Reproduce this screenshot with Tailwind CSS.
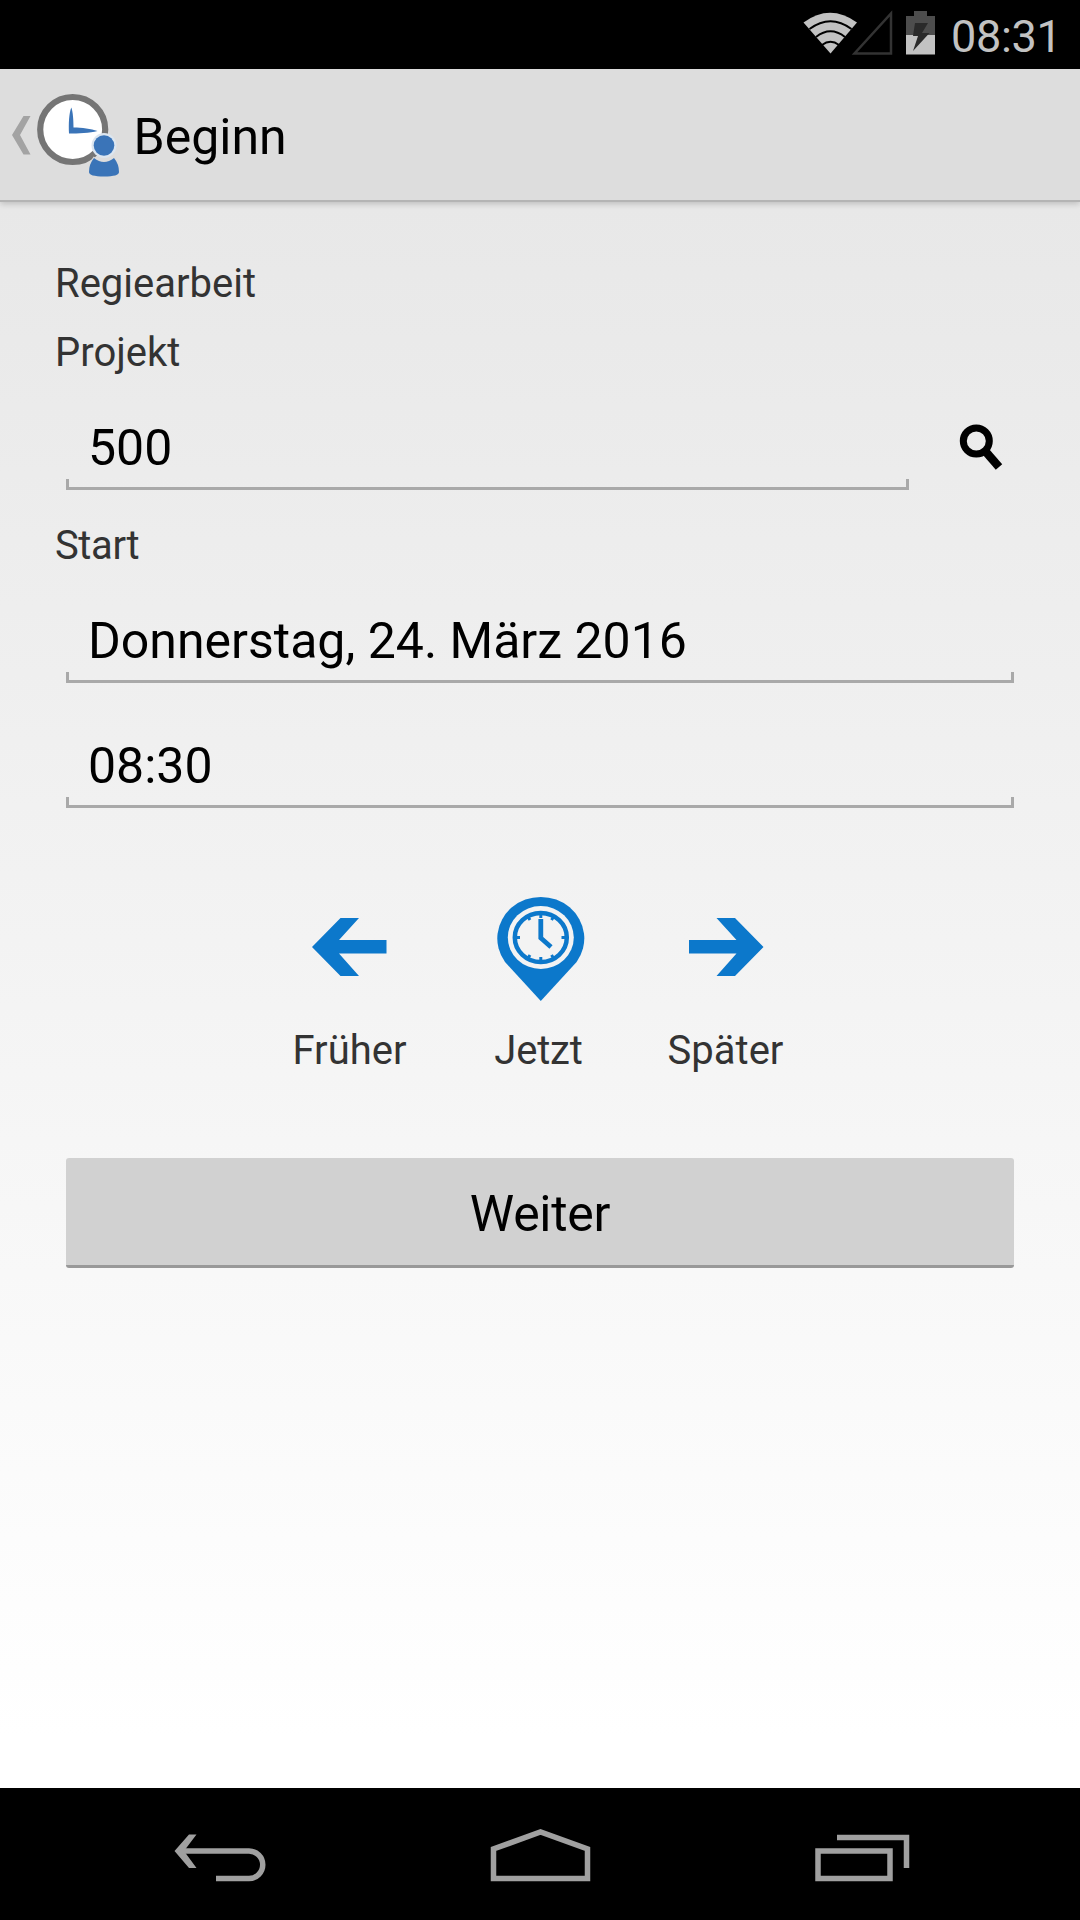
<!DOCTYPE html>
<html lang="de">
<head>
  <meta charset="UTF-8" />
  <meta name="viewport" content="width=device-width, initial-scale=1.0"/>
  <title>Beginn</title>
  <script src="https://cdn.jsdelivr.net/npm/@tailwindcss/browser@4"></script>
</head>
<body class="h-[1920px] w-[1080px] flex flex-col overflow-hidden bg-black text-black font-['Roboto',sans-serif]">

  <!-- Status bar -->
  <div class="h-[69px] shrink-0 flex bg-black">
    <svg class="w-[160px] h-[69px] ml-[791px]" viewBox="791 0 160 69">
      <path d="M803.5 22.5Q830 3 857 22.5L830.5 53.5Z" fill="#c2c2c2"/>
      <g fill="none" stroke="#000" stroke-width="2">
        <path d="M809.5 29Q830.5 13.5 851.5 29M816 37Q830.5 25.5 845 37M822 45Q830.5 38.5 839 45"/>
      </g>
      <path d="M891 13.5V53.5H854.5Z" fill="none" stroke="#333" stroke-width="2.5"/>
      <path d="M914 11H927V16H935V35H906V16H914Z" fill="#4d4d4d"/>
      <path d="M906 35H935V54.5H906Z" fill="#c2c2c2"/>
      <path d="M915 23H928L922 33H929.5L913 51L918 36H913Z" fill="#2a2a2a"/>
    </svg>
    <span class="text-[45px] leading-[74px] h-[69px] tracking-[-0.3px] text-[#c2c2c2]">08:31</span>
  </div>

  <div class="flex-1 flex flex-col bg-linear-to-b from-[#e6e6e6] to-white to-97%">

    <!-- Action bar -->
    <header class="h-[133px] shrink-0 flex bg-[#dddddd] border-b-2 border-[#b4b4b4] shadow-[0_2px_6px_rgba(0,0,0,0.18)]">
      <svg class="w-[135px] h-[131px]" viewBox="0 69 135 131">
        <path d="M23.5 116H30.5L20 135L30.5 154.5H23.5L12 135Z" fill="#a3a3a3"/>
        <circle cx="72.7" cy="129.5" r="32.5" fill="#fff" stroke="#757575" stroke-width="6.2"/>
        <path d="M71.3 107.5C73 112 73.5 120 73.5 127.5C82 127.5 91 129 97.5 131C90 133 78 133.5 69 133.5C68.5 124 69 113 71.3 107.5Z" fill="#3a74b8"/>
        <path d="M94 158Q104 166 114 158Q119 164 119 172Q119 176.5 104 176.5Q89 176.5 89 172Q89 164 94 158Z" fill="#3a74b8" stroke="#dddddd" stroke-width="2" paint-order="stroke"/>
        <circle cx="104" cy="145.5" r="12.5" fill="#dce6f0"/>
        <circle cx="104" cy="145.5" r="10.3" fill="#3a74b8"/>
      </svg>
      <h1 class="text-[50px] leading-[136px] h-[131px] -ml-[1.5px]">Beginn</h1>
    </header>

    <!-- Form -->
    <main class="flex flex-col px-[56px] pt-[47px] text-[50px]">
      <p class="text-[40px] leading-[69px] -ml-px text-[#333]">Regiearbeit</p>
      <p class="text-[40px] leading-[69px] -ml-px text-[#333]">Projekt</p>

      <div class="flex pl-[10px] pt-[30px]">
        <div class="w-[843px]">
          <div class="pl-[22px] leading-[62px]">500</div>
          <div class="h-[11px] border-3 border-t-0 border-[#a9a9a9]"></div>
        </div>
        <svg class="w-[60px] h-[60px] ml-[41px]" viewBox="950 416 60 60">
          <circle cx="976.3" cy="440" r="13" fill="none" stroke="#000" stroke-width="7"/>
          <path d="M986 451L999 466" stroke="#000" stroke-width="8.5"/>
        </svg>
      </div>

      <p class="text-[40px] leading-[69px] mt-[21px] -ml-px tracking-[-0.4px] text-[#333]">Start</p>

      <div class="mt-[30px] mx-[10px]">
        <div class="pl-[22px] leading-[62px]">Donnerstag, 24. März 2016</div>
        <div class="h-[11px] border-3 border-t-0 border-[#a9a9a9]"></div>
      </div>
      <div class="mt-[52px] mx-[10px]">
        <div class="pl-[22px] leading-[62px]">08:30</div>
        <div class="h-[11px] border-3 border-t-0 border-[#a9a9a9]"></div>
      </div>

      <!-- Time shortcuts -->
      <div class="flex justify-center mt-[77px] pr-[5px] text-[40px] text-[#333]">
        <div class="w-[188px] flex flex-col items-center">
          <svg class="w-[76px] h-[120px]" viewBox="312 885 76 120">
            <path d="M312 947L340.500 918H359L339 940H386.500V953.500H339L359 976H340.500Z" fill="#0c78cb"/>
          </svg>
          <span class="leading-[91px]">Früher</span>
        </div>
        <div class="w-[188px] flex flex-col items-center">
          <svg class="w-[100px] h-[120px]" viewBox="488 885 100 120">
            <path d="M540.8 1001L505 962A43.5 41.5 0 1 1 576.600 962Z" fill="#0c78cb"/>
            <ellipse cx="540.8" cy="937.5" rx="33" ry="31.5" fill="#f3f3f3"/>
            <ellipse cx="540.8" cy="937.5" rx="26" ry="24.5" fill="none" stroke="#0c78cb" stroke-width="4.5"/>
            <path d="M540.8 913V918M540.8 957V962M515 937.5H520M561.5 937.5H566.5M528 917L530 920M553.5 917L551.5 920M528 958L530 955M553.5 958L551.5 955" stroke="#0c78cb" stroke-width="3"/>
            <path d="M540.8 919V938L551 947" fill="none" stroke="#0c78cb" stroke-width="4.8"/>
          </svg>
          <span class="leading-[91px] pl-[2px] tracking-[-0.2px]">Jetzt</span>
        </div>
        <div class="w-[188px] flex flex-col items-center">
          <svg class="w-[76px] h-[120px]" viewBox="688 885 76 120">
            <path d="M763.5 947L735 918H716.5L736.5 940H689V953.5H736.5L716.5 976H735Z" fill="#0c78cb"/>
          </svg>
          <span class="leading-[91px]">Später</span>
        </div>
      </div>

      <button class="mx-[10px] mt-[62px] pt-[6px] h-[110px] rounded-[3px] bg-[#d1d1d1] border-b-3 border-[#999] tracking-[-0.3px]">Weiter</button>
    </main>
  </div>

  <!-- Navigation bar -->
  <nav class="h-[132px] shrink-0 bg-black">
    <svg class="w-[1080px] h-[132px]" viewBox="0 1788 1080 132" fill="none" stroke="#a0a0a0" stroke-width="5.5">
      <path d="M178 1851H249A13.5 13.5 0 0 1 249 1878.5H216"/>
      <path d="M189 1834.5H196.5L184 1851L196.5 1868H189L174.5 1851Z" fill="#a0a0a0" stroke="none"/>
      <path d="M493.5 1878.5V1849L540.5 1832L587.5 1849V1878.5Z"/>
      <path d="M818 1851H890V1878.5H818ZM837 1837.5H906.5V1868"/>
    </svg>
  </nav>

</body>
</html>
